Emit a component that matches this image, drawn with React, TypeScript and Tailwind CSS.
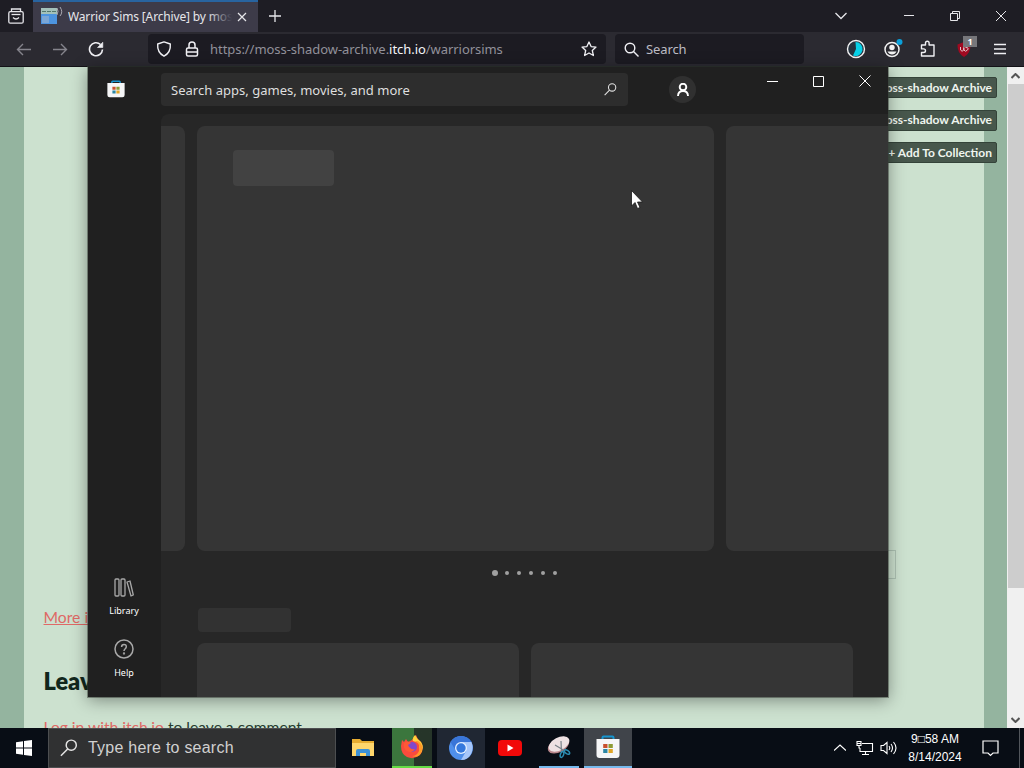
import type { ReactNode } from 'react';

const StoreBag = ({ size }: { size: number }) => (
  <svg width={size} height={size} viewBox="0 0 24 24">
    <path d="M6.500 5V2.500Q6.500 1.500 7.500 1.500H16.500Q17.500 1.500 17.500 2.500V5" fill="none" stroke="#1795cf" strokeWidth="2" />
    <path d="M.5 4H23.500V20Q23.500 23 20.500 23H3.500Q.5 23 .5 20Z" fill="#f5f6f7" />
    <path d="M7.200 9H11.500V13H7.200Z" fill="#c8502e" />
    <path d="M12.500 9H16.800V13H12.500Z" fill="#8c9b34" />
    <path d="M7.200 14H11.500V18H7.200Z" fill="#2c86a4" />
    <path d="M12.500 14H16.800V18H12.500Z" fill="#e0a526" />
  </svg>
);

// magnifier with the handle at bottom left
const WinSearch = ({ size }: { size: number }) => (
  <svg width={size} height={size} viewBox="0 0 16 16" fill="none" stroke="#e4e4e4" strokeWidth="1.300">
    <circle cx="10" cy="5.500" r="4.500" />
    <path d="M6.800 8.800L.8 14.800" />
  </svg>
);

const TabBar = () => (
  <div className="flex h-8 bg-[#1e1d24] text-[#e6e6ea]">
    <div className="flex w-[33px] items-center justify-center pr-px">
      <svg width="16" height="16" viewBox="0 0 16 16" fill="none" stroke="currentColor" strokeWidth="1.300">
        <path d="M3.500 3.500V1H12.500V3.500" />
        <rect x=".8" y="3.700" width="14.400" height="11.500" rx="1.500" />
        <path d="M3.500 6.500H12.500" />
        <path d="M5 9.500Q8 12.500 11 9.500" />
      </svg>
    </div>
    <div className="flex w-[225px] items-center border-t-2 border-[#2864a0] bg-[#3d3b49] pl-2">
      <svg width="23" height="20" viewBox="0 0 23 20" className="shrink-0">
        <path d="M0 1H16V17H0Z" fill="#4d94df" />
        <path d="M0 1H16V7H0Z" fill="#a3c1ba" />
        <path d="M1 4.500H5M6 4.500H10M11 4.500H15" stroke="#53776c" />
        <path d="M1 9H8V16H1Z" fill="#7ba6d5" />
        <path d="M16 1Q18 4 16 8M19 0Q22.500 5 19 9" fill="none" stroke="#aaa9b2" />
      </svg>
      <div className="relative ml-1 w-[164px] overflow-hidden whitespace-nowrap text-[12px] leading-5">
        <span className="tracking-[-0.15px]">Warrior Sims [Archive] by mos</span>
        <div className="absolute right-0 top-0 h-5 w-6 bg-linear-to-r from-transparent to-[#3d3b49]" />
      </div>
      <svg width="10" height="10" viewBox="0 0 10 10" stroke="currentColor" strokeWidth="1.200" className="ml-[5px] shrink-0">
        <path d="M1 1L9 9M9 1L1 9" />
      </svg>
    </div>
    <div className="flex w-[33px] items-center justify-center">
      <svg width="12" height="12" viewBox="0 0 12 12" stroke="currentColor" strokeWidth="1.300">
        <path d="M6 0V12M0 6H12" />
      </svg>
    </div>
    <div className="ml-auto flex items-center pr-[17px]">
      <svg width="12" height="8" viewBox="0 0 12 8" fill="none" stroke="currentColor" strokeWidth="1.300">
        <path d="M.5 1L6 6.500L11.500 1" />
      </svg>
      <svg width="10" height="10" viewBox="0 0 10 10" stroke="currentColor" className="ml-[57px]">
        <path d="M0 4.500H10" />
      </svg>
      <svg width="10" height="10" viewBox="0 0 10 10" fill="none" stroke="currentColor" className="ml-9">
        <path d="M.5 2.500H7.500V9.500H.5ZM2.500 2.500V.5H9.500V7.500H7.500" />
      </svg>
      <svg width="12" height="12" viewBox="0 0 12 12" stroke="currentColor" className="ml-[35px]">
        <path d="M1 1L11 11M11 1L1 11" />
      </svg>
    </div>
  </div>
);

const NavBar = () => (
  <div className="flex h-[35px] items-center border-b border-[#131217] bg-[#2b2a31] text-[#f0f0f4]">
    <div className="flex w-[148px] items-center gap-[20px] pl-4">
      <svg width="16" height="14" viewBox="0 0 16 14" fill="none" stroke="#85848c" strokeWidth="1.400">
        <path d="M15 7.500H1.500M7 2L1.500 7.500L7 13" />
      </svg>
      <svg width="16" height="14" viewBox="0 0 16 14" fill="none" stroke="#85848c" strokeWidth="1.400">
        <path d="M1 7.500H14.500M9 2L14.500 7.500L9 13" />
      </svg>
      <svg width="16" height="16" viewBox="0 0 16 16" fill="none" stroke="currentColor" strokeWidth="1.600">
        <path d="M12.500 3.500A6.500 6.500 0 1 0 14.500 8.500" />
        <path d="M14.800 1.200V6.500H9.500Z" fill="currentColor" strokeWidth=".6" />
      </svg>
    </div>
    <div className="flex h-[30px] w-[458px] items-center rounded-sm bg-[#1c1b22] pl-2">
      <svg width="16" height="16" viewBox="0 0 16 16" fill="none" stroke="currentColor" strokeWidth="1.400">
        <path d="M8 .9L14.300 3Q15 11.500 8 15.200Q1 11.500 1.700 3Z" strokeLinejoin="round" />
      </svg>
      <svg width="14" height="16" viewBox="0 0 14 16" fill="none" stroke="currentColor" strokeWidth="1.500" className="ml-[13px]">
        <rect x="1.500" y="7" width="11" height="8" rx="1.500" />
        <path d="M4 7V4Q4 1 7 1T10 4V7M1.500 11H12.500" />
      </svg>
      <div className="ml-[11px] w-[371px] whitespace-nowrap pt-[2px] text-[13px] tracking-[-0.05px] text-[#92919a]">
        https://moss-shadow-archive.<span className="text-[#f5f5f8]">itch.io</span>/warriorsims
      </div>
      <svg width="16" height="16" viewBox="0 0 16 16" fill="none" stroke="currentColor" strokeWidth="1.300" strokeLinejoin="round">
        <path d="M8 1L10.100 5.600L15 6.100L11.300 9.500L12.400 14.500L8 12L3.600 14.500L4.700 9.500L1 6.100L5.900 5.600Z" />
      </svg>
    </div>
    <div className="ml-[9px] flex h-[30px] w-[189px] items-center rounded-sm bg-[#1c1b22] pl-[9px]">
      <svg width="15" height="15" viewBox="0 0 15 15" fill="none" stroke="currentColor" strokeWidth="1.400">
        <circle cx="6" cy="6" r="4.800" />
        <path d="M9.500 9.500L14.500 14.500" />
      </svg>
      <span className="ml-[7px] pt-[2px] text-[13px] tracking-[-0.1px] text-[#bdbcc4]">Search</span>
    </div>
    <div className="ml-auto flex items-center pr-[18px]">
      <svg width="20" height="20" viewBox="0 0 20 20">
        <circle cx="10" cy="10" r="8.500" fill="#263440" stroke="#f2f2f2" strokeWidth="1.400" />
        <path d="M9.500 3A7 7 0 1 1 7 16.500L10 10Z" fill="#06d1e8" />
      </svg>
      <svg width="20" height="22" viewBox="0 0 20 22" className="ml-[17px]">
        <circle cx="9" cy="11.500" r="7" fill="none" stroke="#f2f2f2" strokeWidth="1.500" />
        <circle cx="9" cy="9.500" r="2.700" fill="#f2f2f2" />
        <path d="M4.500 13.500H13.500Q12 16.500 9 16.500T4.500 13.500Z" fill="#f2f2f2" />
        <circle cx="16.500" cy="4" r="3" fill="#0ba0da" />
      </svg>
      <svg width="16" height="18" viewBox="0 0 16 18" fill="none" stroke="currentColor" strokeWidth="1.400" strokeLinejoin="round" className="ml-[17px]">
        <path d="M1.500 7V5H5.500V3Q5.500 1.200 7.300 1.200T9.100 3V5H14V16H1.500V12.500H3.500Q5.500 12.500 5.500 10.700T3.500 8.900H1.500V7" />
      </svg>
      <div className="relative ml-[18px] h-5 w-5">
        <svg width="20" height="20" viewBox="0 0 20 20">
          <path d="M10 3L16.500 5.500Q17 14 10 18Q3 14 3.500 5.500Z" fill="#a00a21" />
          <path d="M6.500 8V11Q8 13.500 9.800 11V8.500V11Q11.500 13.500 13.500 11T11.500 8.500" fill="none" stroke="#e4c5ca" />
        </svg>
        <span className="absolute left-[9px] top-[-3px] h-[11px] w-[14px] bg-[#77777b] text-center text-[9px] font-bold leading-[11px] text-white">1</span>
      </div>
      <svg width="12" height="12" viewBox="0 0 12 12" stroke="currentColor" strokeWidth="1.400" className="ml-[20px]">
        <path d="M0 1.500H12M0 6H12M0 10.500H12" />
      </svg>
    </div>
  </div>
);

const PageButton = ({ children }: { children: ReactNode }) => (
  <div className="flex h-[21px] w-[124px] items-center justify-end whitespace-nowrap rounded-[2px] border border-[#344339] bg-[#47574c] pr-[4px] text-[12px] font-bold text-[#eff5ef]">
    {children}
  </div>
);

const ItchPage = () => (
  <div className="flex h-[661px] overflow-hidden bg-[#94b49f] font-[Lato,sans-serif]">
    <div className="ml-6 flex h-full w-[960px] shrink-0 flex-col bg-[#cce1cf] pl-[19.500px]">
      <div className="ml-[829.500px] mt-[10px] flex w-[124px] flex-col gap-[11.500px]">
        <PageButton>oss-shadow Archive</PageButton>
        <PageButton>oss-shadow Archive</PageButton>
        <PageButton>+ Add To Collection</PageButton>
      </div>
      <div className="ml-[840.500px] mt-[387px] h-[29px] w-[12px] shrink-0 border border-[#adc2b3]" />
      <p className="mt-[26px] whitespace-nowrap text-[15.700px] leading-6 text-[#df6966] underline">More i</p>
      <h2 className="mt-[36px] text-[23.500px] font-extrabold leading-8 text-[#11271c]">Leav</h2>
      <p className="mt-[18px] shrink-0 whitespace-nowrap text-[15.600px] leading-6 text-[#263c2f]">
        <span className="text-[#df6966] underline">Log in with itch.io</span> to leave a comment.
      </p>
    </div>
    <div className="ml-auto flex w-[17px] flex-col items-center bg-[#f0f0f0]">
      <div className="flex h-[17px] items-center">
        <svg width="9" height="6" viewBox="0 0 9 6" fill="none" stroke="#555" strokeWidth="2">
          <path d="M.5 5L4.500 1L8.500 5" />
        </svg>
      </div>
      <div className="h-[504px] w-[16px] bg-[#cdcdcd]" />
      <div className="mt-auto flex h-[17px] items-center">
        <svg width="9" height="6" viewBox="0 0 9 6" fill="none" stroke="#555" strokeWidth="2">
          <path d="M.5 1L4.500 5L8.500 1" />
        </svg>
      </div>
    </div>
  </div>
);

const StoreWindow = () => (
  <div className="absolute left-[88px] top-[67px] flex h-[630px] w-[800px] flex-col overflow-hidden bg-[#202020] text-white shadow-[0_3px_16px_rgba(0,0,0,0.4),0_0_0_1px_rgba(70,80,70,0.5)]">
    <div className="flex h-[47px] shrink-0">
      <div className="flex w-[73px] items-center pb-[3px] pl-[19px]">
        <StoreBag size={18} />
      </div>
      <div className="mt-[6px] flex h-[33px] w-[467px] items-center justify-between rounded bg-[#2d2d2d] pl-[10px] pr-[11px]">
        <span className="pt-[2px] text-[13px] tracking-[0.02px] text-[#dfdfdf]">Search apps, games, movies, and more</span>
        <WinSearch size={13} />
      </div>
      <div className="ml-[41px] mt-[9px] flex h-[27px] w-[27px] items-center justify-center rounded-full bg-[#303030]">
        <svg width="14" height="14" viewBox="0 0 14 14" fill="none" stroke="white" strokeWidth="1.900">
          <circle cx="7" cy="4" r="3.300" />
          <path d="M2 13Q2.200 8 7 8T12 13" />
        </svg>
      </div>
      <div className="ml-auto flex h-[28px] items-center gap-[35px] pr-[17px]">
        <svg width="11" height="11" viewBox="0 0 11 11" stroke="white"><path d="M0 5.500H11" /></svg>
        <svg width="11" height="11" viewBox="0 0 11 11" fill="none" stroke="white"><path d="M.5 .5H10.500V10.500H.5Z" /></svg>
        <svg width="12" height="12" viewBox="0 0 12 12" stroke="white"><path d="M.5 .5L11.500 11.500M11.500 .5L.5 11.500" /></svg>
      </div>
    </div>
    <div className="flex min-h-0 flex-1">
      <div className="flex w-[73px] shrink-0 flex-col items-center justify-end pb-[16px] pr-px text-[9px] leading-4">
        <svg width="20" height="20" viewBox="0 0 20 20" fill="none" stroke="#a8a8a8" strokeWidth="1.300">
          <rect x="1" y="2" width="4" height="17" rx="1" />
          <rect x="7" y="2" width="4" height="17" rx="1" />
          <path d="M13 5L16 4L19.300 18L17 19Z" strokeLinejoin="round" />
        </svg>
        <span className="mt-[6px]">Library</span>
        <svg width="20" height="20" viewBox="0 0 20 20" fill="none" stroke="#a8a8a8" strokeWidth="1.500" className="mt-[20px]">
          <circle cx="10" cy="10" r="9" />
          <path d="M7.600 8Q7.600 5.500 10 5.500T12.300 7.800Q12.300 9 11 10Q10 10.800 10 12" />
          <circle cx="10" cy="14.500" r=".4" fill="#a8a8a8" />
        </svg>
        <span className="mt-[6px]">Help</span>
      </div>
      <div className="flex min-w-0 flex-1 flex-col overflow-hidden rounded-tl-lg bg-[#272727] pt-3">
        <div className="flex h-[425px] shrink-0 gap-3">
          <div className="w-6 shrink-0 rounded-r-lg bg-[#353535]" />
          <div className="w-[517px] shrink-0 rounded-lg bg-[#353535] pl-9 pt-6">
            <div className="h-9 w-[101px] rounded bg-[#424242]" />
          </div>
          <div className="flex-1 rounded-l-lg bg-[#353535]" />
        </div>
        <div className="ml-[331px] mt-[19px] flex h-[6px] items-center gap-2">
          <div className="-mr-px h-[6px] w-[6px] rounded-full bg-[#a0a0a0]" />
          {[1, 2, 3, 4, 5].map((n) => (
            <div key={n} className="h-1 w-1 rounded-full bg-[#a0a0a0]" />
          ))}
        </div>
        <div className="ml-[37px] mt-[32px] h-6 w-[93px] shrink-0 rounded bg-[#323232]" />
        <div className="ml-9 mt-[11px] flex min-h-0 flex-1 gap-3">
          <div className="w-[322px] rounded-t-lg bg-[#353535]" />
          <div className="w-[322px] rounded-t-lg bg-[#353535]" />
        </div>
      </div>
    </div>
  </div>
);

const Taskbar = () => (
  <div className="flex h-10 bg-[#080d15] font-['Liberation_Sans',Arial,sans-serif] text-white">
    <div className="flex w-12 items-center justify-center">
      <svg width="16" height="16" viewBox="0 0 16 16" fill="white">
        <path d="M0 2.300L7 1.300V7.600H0ZM8 1.100L16 0V7.600H8ZM0 8.500H7V14.700L0 13.700ZM8 8.500H16V16L8 14.900Z" />
      </svg>
    </div>
    <div className="flex w-[288px] items-center border border-[#4c4e50] bg-[#303132] pl-[11px] text-[#d0d0d0]">
      <WinSearch size={18} />
      <span className="ml-[10px] text-[16px] tracking-[0.23px]">Type here to search</span>
    </div>
    <div className="ml-[3px] flex w-12 items-center justify-center">
      <svg width="22" height="20" viewBox="0 0 22 20">
        <path d="M0 1H8L10 3H22V18H0Z" fill="#e7ac31" />
        <path d="M0 5H22V18H0Z" fill="#ffd66c" />
        <path d="M4 18V13Q4 11 6 11H16Q18 11 18 13V18H14V15H8V18Z" fill="#3d91d6" />
      </svg>
    </div>
    <div className="ml-[5px] flex w-10 items-center justify-center border-b-2 border-[#65dd45] bg-linear-to-r from-[#3b763d] from-55% to-[#263529] to-55%">
      <svg width="24" height="24" viewBox="0 0 24 24">
        <path d="M1 11L2 5L4 7L6 4L8 7L12 5Q13 2 16 0Q17 4 21 7Q25 14 20 20Q14 25 7 22Q1 19 1 11Z" fill="#f94b3d" />
        <path d="M15 0Q12 3 13 6L19 8L20 19Q25 13 21 7Q17 4 15 0Z" fill="#ffd43b" />
        <path d="M15 6Q21 9 19 16Q17 21 12 21Q20 24 22 15Q23 9 18 6Z" fill="#ff9b27" />
        <circle cx="12" cy="12" r="5" fill="#8148ca" />
        <path d="M4 8Q8 5 11 8L8 10Q10 15 15 14Q12 19 7 16Q3 14 4 8Z" fill="#ff5935" />
      </svg>
    </div>
    <div className="ml-[5px] flex w-12 items-center justify-center bg-[#202733]">
      <svg width="24" height="24" viewBox="0 0 24 24">
        <circle cx="12" cy="12" r="12" fill="#4f8fea" />
        <path d="M12 6H22.400Q25 12 22 18T12 24L17.200 15Z" fill="#a7c7fa" />
        <path d="M1.600 6Q5 0 12 0T22.400 6H12L7 15Z" fill="#3975d8" />
        <circle cx="12" cy="12" r="6" fill="#e3efff" />
        <circle cx="12" cy="12" r="4.700" fill="#3478dd" />
      </svg>
    </div>
    <div className="ml-[1px] flex w-12 items-center justify-center">
      <svg width="24" height="18" viewBox="0 0 24 18">
        <rect y="1" width="24" height="16" rx="4" fill="#f20909" />
        <path d="M9.500 5.500L15.500 9L9.500 12.500Z" fill="white" />
      </svg>
    </div>
    <div className="ml-[5px] flex w-10 items-center justify-center border-b-2 border-[#76b9ed]">
      <svg width="24" height="24" viewBox="0 0 24 24">
        <ellipse cx="11.500" cy="10.500" rx="11.500" ry="6.800" transform="rotate(-28 11.500 10.500)" fill="#b9868b" />
        <ellipse cx="12" cy="9" rx="11.200" ry="6.500" transform="rotate(-28 12 9)" fill="#eee1e3" />
        <path d="M8 10L18 16M14 6L14.500 18" stroke="#788088" strokeWidth="1.200" />
        <ellipse cx="15" cy="19.500" rx="1.600" ry="3" transform="rotate(20 15 19.500)" fill="none" stroke="#2c8cb2" strokeWidth="1.500" />
        <ellipse cx="20" cy="17" rx="3" ry="1.600" transform="rotate(35 20 17)" fill="none" stroke="#2c8cb2" strokeWidth="1.500" />
      </svg>
    </div>
    <div className="ml-[5px] flex w-12 items-center justify-center border-b-2 border-[#76b9ed] bg-[#40444a]">
      <StoreBag size={24} />
    </div>
    <div className="ml-auto flex items-center">
      <svg width="12" height="8" viewBox="0 0 12 8" fill="none" stroke="white" strokeWidth="1.200">
        <path d="M0 6.500L6 1L12 6.500" />
      </svg>
      <svg width="18" height="16" viewBox="0 0 18 16" fill="none" stroke="white" strokeWidth="1.100" className="ml-[10px]">
        <path d="M6 3.500H16.500V11.500H4V8M9.500 11.500V14M6 14.500H13M1 1.500H5V5.500H1ZM3 5.500V8H4M1 3.500H5" />
      </svg>
      <svg width="17" height="16" viewBox="0 0 17 16" fill="none" stroke="white" strokeWidth="1.100" className="ml-[6px]">
        <path d="M1 5.500H3.500L7 2.500V13.500L3.500 10.500H1ZM9 6Q10.500 8 9 10M11 4Q14 8 11 12M13.500 2Q18.500 8 13.500 14" />
      </svg>
      <div className="ml-[10px] w-[56px] whitespace-nowrap text-center text-[12px] leading-[18px]">
        <div>9□58 AM</div>
        <div>8/14/2024</div>
      </div>
      <svg width="17" height="18" viewBox="0 0 17 18" fill="none" stroke="white" strokeWidth="1.200" className="ml-[19px]">
        <path d="M1 2H16V14H11L8.500 16.500L6 14H1Z" />
      </svg>
      <div className="ml-[20px] h-10 w-[5px] border-l border-[#52565c]" />
    </div>
  </div>
);

const Cursor = () => (
  <svg width="13" height="20" viewBox="0 0 13 20" className="absolute left-[631px] top-[190px]">
    <path d="M.5 .5V16L4 12.500L6.500 18.500L9 17.500L6.500 12H11.500Z" fill="white" stroke="#191919" strokeWidth=".8" />
  </svg>
);

const App = () => {
  return (
    <div className="relative h-[768px] w-[1024px] overflow-hidden font-['Noto_Sans',sans-serif]">
      <TabBar />
      <NavBar />
      <ItchPage />
      <Taskbar />
      <StoreWindow />
      <Cursor />
    </div>
  );
};

export default App;
